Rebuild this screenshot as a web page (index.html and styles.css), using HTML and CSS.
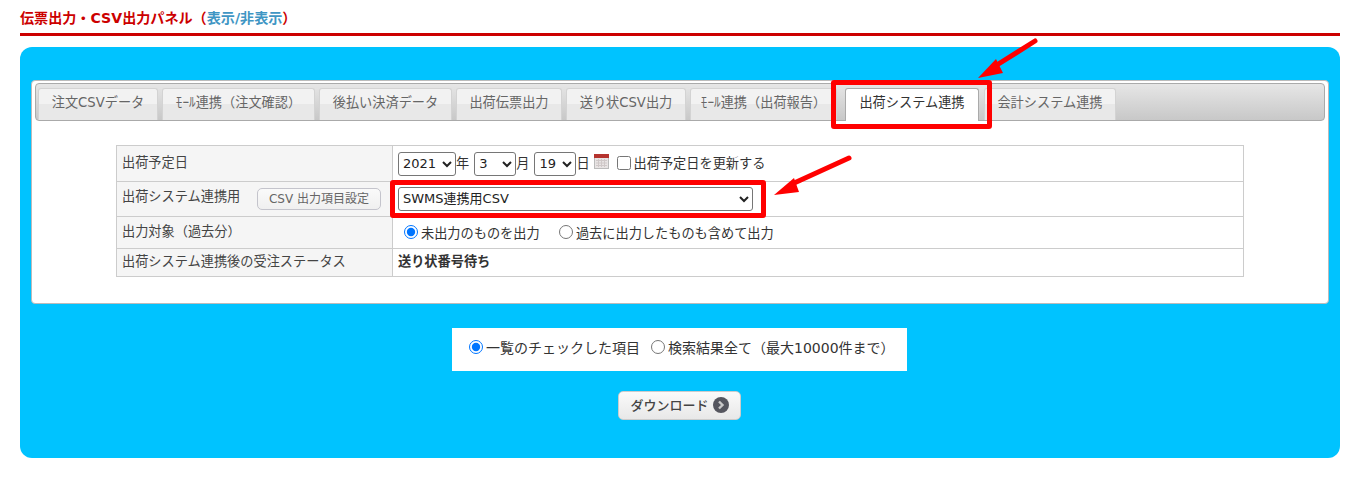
FILE: index.html
```html
<!DOCTYPE html>
<html lang="ja">
<head>
    <meta charset="UTF-8">
    <meta name="viewport" content="width=device-width, initial-scale=1.0">
    <title>伝票出力・CSV出力パネル</title>
    <link rel="stylesheet" href="styles.css">
</head>
<body>
    <!-- 見出し -->
    <h2 class="panel-title">伝票出力・CSV出力パネル（<a href="#" class="toggle-link">表示/非表示</a>）</h2>

    <div class="panel">
        <div class="tab-box">
            <!-- タブ -->
            <ul class="tab-bar">
                <li class="tab tab-1">注文CSVデータ</li>
                <li class="tab tab-2">ﾓｰﾙ連携（注文確認）</li>
                <li class="tab tab-3">後払い決済データ</li>
                <li class="tab tab-4">出荷伝票出力</li>
                <li class="tab tab-5">送り状CSV出力</li>
                <li class="tab tab-6">ﾓｰﾙ連携（出荷報告）</li>
                <li class="tab tab-7 active">出荷システム連携</li>
                <li class="tab tab-8">会計システム連携</li>
            </ul>

            <!-- 設定テーブル -->
            <table class="form-table">
                <tr class="row-date">
                    <th>出荷予定日</th>
                    <td>
                        <div class="date-line">
                            <select class="sel sel-year"><option>2021</option></select><span>年</span>
                            <select class="sel sel-month"><option>3</option></select><span>月</span>
                            <select class="sel sel-day"><option>19</option></select><span>日</span>
                            <svg class="cal-icon" width="15" height="15" viewBox="0 0 15 15">
                                <rect x="0.5" y="0.5" width="14" height="14" fill="#e8e4e4" stroke="#bbb"/>
                                <rect x="0" y="0" width="15" height="4" fill="#b5332e"/>
                                <path d="M2 6.5h11M2 9h11M2 11.5h11M4.5 5v8M7.5 5v8M10.5 5v8" stroke="#cfc8c8" fill="none"/>
                            </svg>
                            <label class="opt opt-update"><input type="checkbox">出荷予定日を更新する</label>
                        </div>
                    </td>
                </tr>
                <tr class="row-system">
                    <th>
                        <div class="system-head">
                            <span class="system-label">出荷システム連携用</span>
                            <button class="csv-btn">CSV 出力項目設定</button>
                        </div>
                    </th>
                    <td>
                        <select class="sel sel-system"><option>SWMS連携用CSV</option></select>
                    </td>
                </tr>
                <tr class="row-target">
                    <th>出力対象（過去分）</th>
                    <td>
                        <label class="opt"><input type="radio" name="target" checked>未出力のものを出力</label>
                        <label class="opt"><input type="radio" name="target">過去に出力したものも含めて出力</label>
                    </td>
                </tr>
                <tr class="row-status">
                    <th>出荷システム連携後の受注ステータス</th>
                    <td><b>送り状番号待ち</b></td>
                </tr>
            </table>
        </div>

        <!-- 出力範囲 -->
        <div class="range-box">
            <label class="opt"><input type="radio" name="range" checked>一覧のチェックした項目</label>
            <label class="opt"><input type="radio" name="range">検索結果全て（最大10000件まで）</label>
        </div>

        <div class="download-line">
            <button class="download-btn">ダウンロード
                <svg width="16" height="16" viewBox="0 0 16 16">
                    <circle cx="8" cy="8" r="8" fill="#55565f"/>
                    <path d="M6 4.5 9.5 8 6 11.5" fill="none" stroke="#c9c9c9" stroke-width="2.4"/>
                </svg>
            </button>
        </div>
    </div>

    <!-- 赤枠と矢印 -->
    <div class="mark mark-tab"></div>
    <div class="mark mark-select"></div>
    <svg class="arrows" width="1358" height="477" viewBox="0 0 1358 477">
        <path d="M1035 41 992 68" stroke="#f00" stroke-width="5" stroke-linecap="round"/>
        <path d="M978 78 996 59 1003 73Z" fill="#f00"/>
        <path d="M849 158 792 184" stroke="#f00" stroke-width="5" stroke-linecap="round"/>
        <path d="M774 195 794 178 799 192Z" fill="#f00"/>
    </svg>
</body>
</html>
```

FILE: styles.css
```css
/* 基本 */
* {
    box-sizing: border-box;
}

body {
    margin: 0;
    padding: 0 18px 0 20px;
    background: #fff;
    color: #333;
    font-family: "DejaVu Sans", "Noto Sans CJK JP", sans-serif;
    font-size: 13px;
    overflow: hidden;
}

/* 見出し */
.panel-title {
    margin: 0;
    height: 36px;
    padding-top: 9px;
    border-bottom: 3px solid #c00;
    color: #c00;
    font-size: 14.1px;
    line-height: 18px;
    font-weight: bold;
}

.toggle-link {
    color: #3f96c4;
    text-decoration: none;
}

/* 青いパネル */
.panel {
    height: 411px;
    margin-top: 11px;
    padding: 33px 11px 0;
    background: #00c3ff;
    border-radius: 12px;
}

.tab-box {
    height: 224px;
    padding: 2px 3px 3px;
    background: #fff;
    border: 1px solid #bbb;
    border-radius: 4px;
}

/* タブ */
.tab-bar {
    display: flex;
    height: 38px;
    margin: 0 0 24px;
    padding: 4px 0 0 2px;
    list-style: none;
    background: linear-gradient(#e6e6e6, #c8c8c8);
    border: 1px solid #aaa;
    border-radius: 4px;
}

.tab {
    height: 32px;
    margin-right: 4px;
    color: #666;
    font-size: 13.2px;
    line-height: 28px;
    text-align: center;
    white-space: nowrap;
    background: linear-gradient(#f2f2f2 50%, #e8e8e8 50%);
    border: 1px solid #d3d3d3;
    border-bottom: 0;
    border-radius: 3px 3px 0 0;
}

.tab.active {
    height: 33px;
    color: #333;
    background: #fff;
    border-color: #aaa;
}

.tab-1 { width: 120px; }
.tab-2 { width: 153px; }
.tab-3 { width: 133px; }
.tab-4 { width: 106px; }
.tab-5 { width: 120px; }
.tab-6 { width: 147px; margin-right: 8px; }
.tab-7 { width: 134px; margin-right: 5px; }
.tab-8 { width: 132px; }

/* テーブル */
.form-table {
    width: 1128px;
    margin-left: 81px;
    border-collapse: collapse;
    table-layout: fixed;
    font-size: 13.2px;
}

.form-table th,
.form-table td {
    padding: 0 5px;
    border: 1px solid #ccc;
    font-weight: normal;
    text-align: left;
}

.form-table th {
    width: 276px;
    background: #f5f5f5;
    color: #444;
}

.form-table td b {
    font-weight: bold;
}

.row-date { height: 36px; }
.row-system { height: 35px; }
.row-target { height: 32px; }
.row-status { height: 28px; }

.row-date th,
.row-target th,
.row-status th,
.row-status td {
    padding-bottom: 4px;
}

.date-line {
    display: flex;
    align-items: center;
}

.date-line span,
.opt-update {
    margin-bottom: 2px;
}

.sel {
    height: 24px;
    padding: 0 0 1px;
    background: #fff;
    color: #222;
    border: 1px solid #767676;
    border-radius: 3px;
    font-family: inherit;
    font-size: 13px;
}

.sel-year { width: 58px; }
.sel-month { width: 42px; margin-left: 5px; }
.sel-day { width: 42px; margin-left: 5px; }
.sel-system { display: block; width: 355px; }

.cal-icon {
    margin: 0 0 5px 4px;
}

.system-head {
    display: flex;
    align-items: center;
    justify-content: space-between;
    padding-right: 6px;
}

.system-label {
    margin-bottom: 7px;
}

.csv-btn {
    width: 124px;
    height: 22px;
    padding: 0 0 3px;
    background: linear-gradient(#fafafa, #f0f0f0);
    color: #666;
    border: 1px solid #c4c4cc;
    border-radius: 5px;
    font-family: inherit;
    font-size: 12px;
}

/* ラジオ・チェック */
.opt {
    display: inline-flex;
    align-items: center;
}

.opt input {
    width: 14px;
    height: 14px;
    margin: 0 3px 0 0;
}

.opt-update {
    margin-left: 8px;
}

.row-target td {
    padding-left: 11px;
}

.row-target .opt + .opt {
    margin-left: 15px;
}

/* 出力範囲 */
.range-box {
    display: flex;
    align-items: center;
    width: 455px;
    height: 43px;
    margin: 24px 0 0 421px;
    padding: 0 0 5px 17px;
    background: #fff;
    color: #333;
    font-size: 14px;
}

.range-box .opt + .opt {
    margin-left: 11px;
}

.download-line {
    display: flex;
    justify-content: center;
    margin: 20px 1px 0 0;
}

.download-btn {
    display: flex;
    align-items: center;
    justify-content: center;
    gap: 4px;
    width: 123px;
    height: 29px;
    padding: 0 0 2px;
    background: linear-gradient(#fafafa, #e8e8e8);
    color: #444;
    border: 1px solid #ccc;
    border-radius: 5px;
    font-family: inherit;
    font-size: 13px;
    font-weight: 500;
}

/* 注釈 */
.mark {
    position: absolute;
    border: 5px solid #f00;
    border-radius: 3px;
}

.mark-tab {
    left: 831px;
    top: 80px;
    width: 161px;
    height: 49px;
}

.mark-select {
    left: 390px;
    top: 180px;
    width: 376px;
    height: 38px;
}

.arrows {
    position: absolute;
    left: 0;
    top: 0;
    pointer-events: none;
}
```
